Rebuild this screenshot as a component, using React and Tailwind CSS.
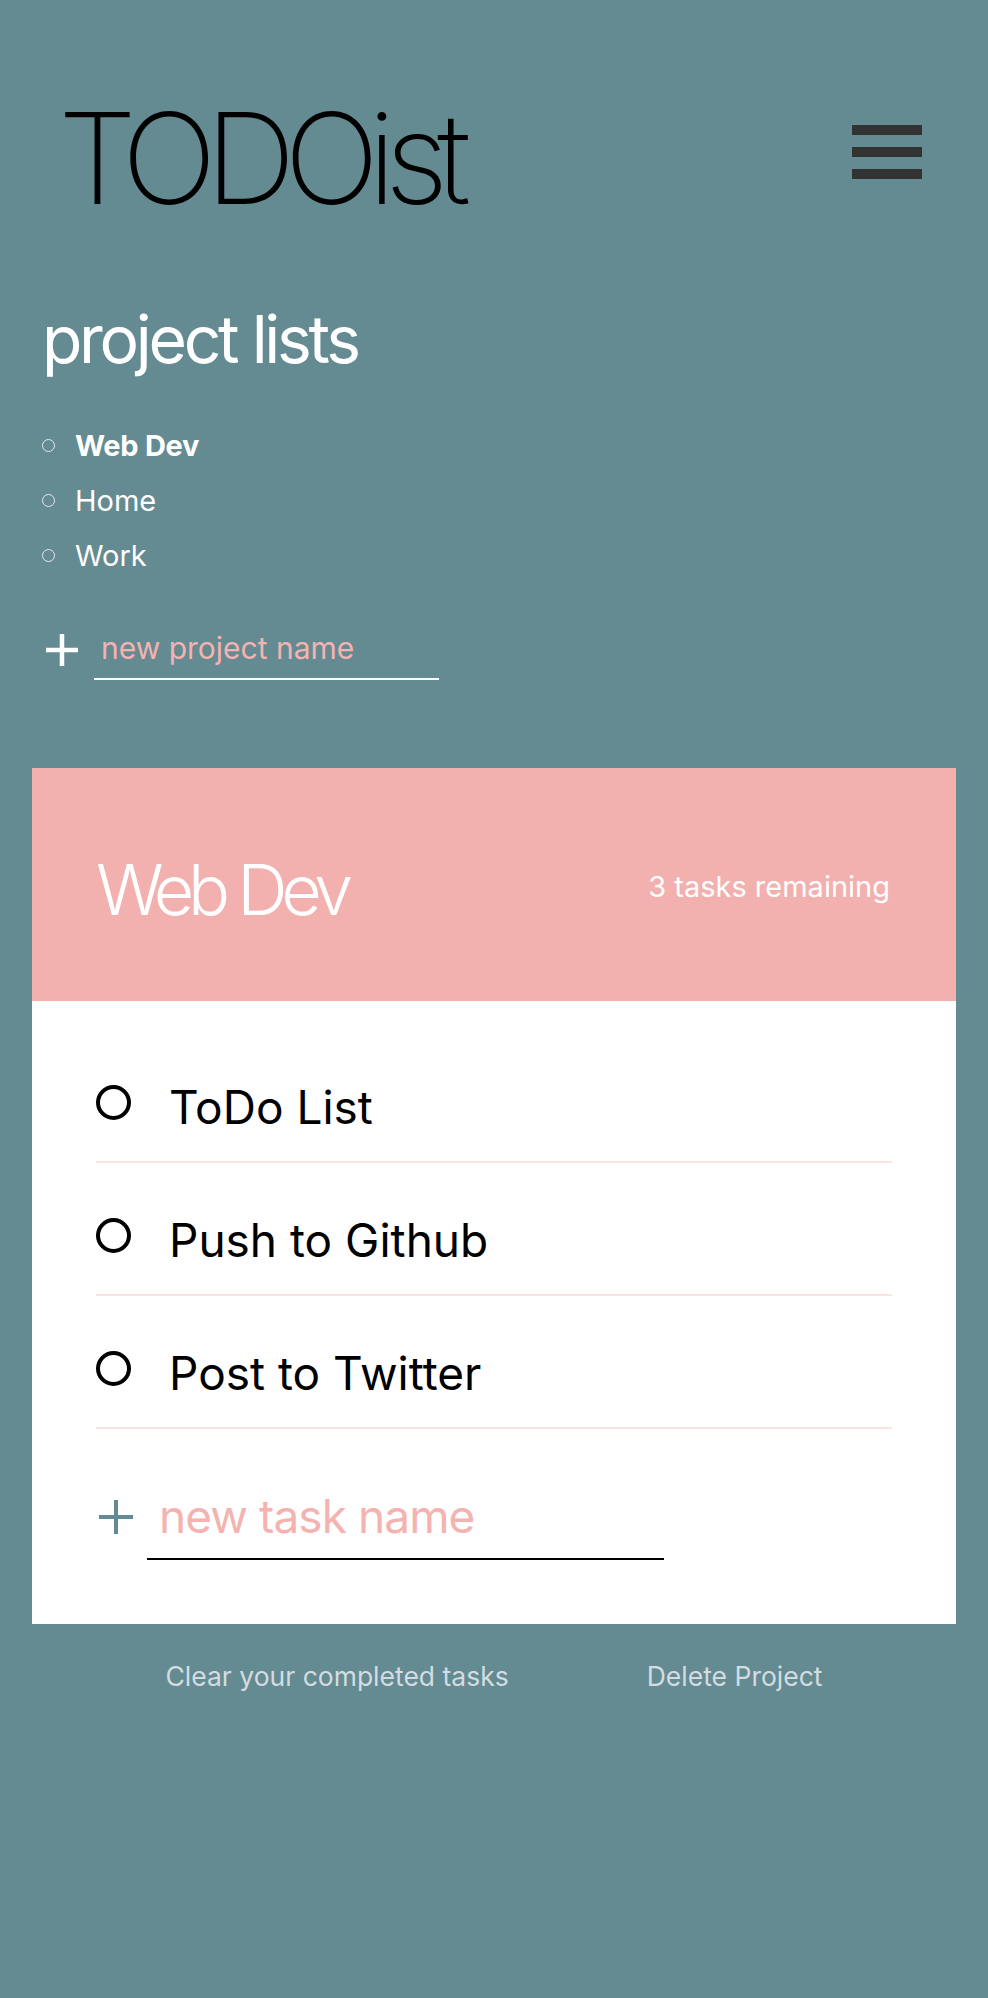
import React from "react";

function Plus({ size, color, width }) {
  const h = size / 2;
  return (
    <svg width={size} height={size} viewBox={`0 0 ${size} ${size}`} className="shrink-0">
      <path d={`M${h} 0V${size}M0 ${h}H${size}`} stroke={color} strokeWidth={width} fill="none" />
    </svg>
  );
}

export default function App() {
  const projects = [
    { name: "Web Dev", active: true },
    { name: "Home" },
    { name: "Work" },
  ];
  const tasks = ["ToDo List", "Push to Github", "Post to Twitter"];
  return (
    <div className="min-h-[1998px] bg-[#648a92] font-['Inter',sans-serif]">
      <header className="flex justify-between items-start pt-[95px] pl-[58px] pr-[66px]">
        <h1 className="text-[126px] leading-none font-extralight tracking-[-0.09em] text-black">TODOist</h1>
        <button className="mt-[30px] flex flex-col gap-[12px] w-[70px]">
          <span className="block h-[10px] bg-[#333333]" />
          <span className="block h-[10px] bg-[#333333]" />
          <span className="block h-[10px] bg-[#333333]" />
        </button>
      </header>

      <section className="pl-[42px] mt-[85px]">
        <h2 className="text-[66px] leading-none tracking-[-0.05em] text-white">project lists</h2>
        <ul className="mt-[46px]">
          {projects.map((p) => (
            <li key={p.name} className="flex items-center h-[55px] text-[29px] text-white">
              <span className="mr-[20px] w-[13px] h-[13px] rounded-full border border-[#e3e9ea] shrink-0" />
              <span className={p.active ? "font-bold tracking-[-0.01em]" : "font-normal"}>{p.name}</span>
            </li>
          ))}
        </ul>
        <div className="mt-[50px] flex items-start">
          <div className="ml-[4px] mt-[1px]">
            <Plus size={32} color="#ffffff" width={4.5} />
          </div>
          <input
            type="text"
            placeholder="new project name"
            className="ml-[16px] w-[345px] h-[47px] pb-[15px] pl-[7px] border-0 border-b-2 border-white bg-transparent text-[30px] leading-none text-white outline-none placeholder:text-[#f4b3b0]"
          />
        </div>
      </section>

      <main className="mx-[32px] mt-[88px]">
        <div className="h-[233px] bg-[#f2b1ae] flex justify-between items-start pt-[87px] pl-[64px] pr-[66px]">
          <h2 className="text-[70px] leading-none font-light tracking-[-0.09em] text-white">Web Dev</h2>
          <p className="mt-[17px] text-[29px] leading-none text-white">3 tasks remaining</p>
        </div>
        <div className="bg-white px-[64px] pt-[29px]">
          <ul>
            {tasks.map((t) => (
              <li key={t} className="flex items-start pt-[54px] pb-[31px] border-b-2 border-[#fbe3e3]">
                <span className="mt-[1px] w-[35px] h-[35px] rounded-full border-[4px] border-black shrink-0" />
                <span className="ml-[38px] text-[46px] leading-none text-black">{t}</span>
              </li>
            ))}
          </ul>
          <div className="py-[64px] flex items-start">
            <div className="ml-[3px] mt-[7px]">
              <Plus size={34} color="#638b93" width={4} />
            </div>
            <input
              type="text"
              placeholder="new task name"
              className="ml-[14px] w-[517px] h-[67px] pb-[19px] pl-[12px] border-0 border-b-2 border-black bg-transparent text-[46px] leading-none tracking-[-0.02em] text-black outline-none placeholder:text-[#f4b3b0]"
            />
          </div>
        </div>
      </main>

      <footer className="flex justify-center gap-[138px] pt-[39px] text-[26.5px] leading-none text-[#d3dde0]">
        <button>Clear your completed tasks</button>
        <button>Delete Project</button>
      </footer>
    </div>
  );
}
